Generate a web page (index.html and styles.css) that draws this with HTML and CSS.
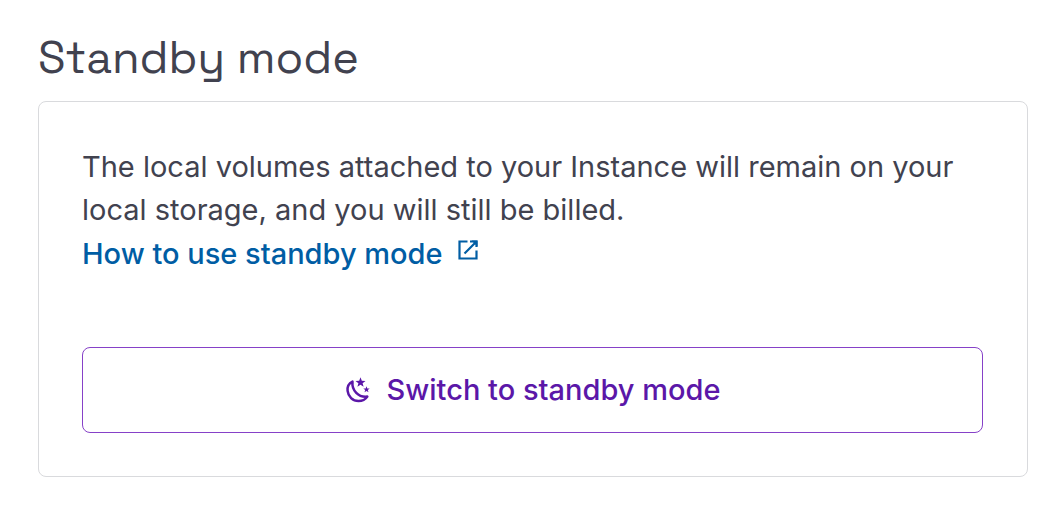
FILE: index.html
```html
<!DOCTYPE html>
<html lang="en">
<head>
<meta charset="utf-8">
<meta name="viewport" content="width=device-width, initial-scale=1">
<title>Standby mode</title>
<link rel="stylesheet" href="styles.css">
</head>
<body>
<main class="page">
  <h1 class="title">Standby mode</h1>
  <section class="card">
    <p class="text">The local volumes attached to your Instance will remain on your local storage, and you will still be billed.</p>
    <a class="link" href="#">How to use standby mode
      <svg class="link-icon" viewBox="0 0 22 22" aria-hidden="true"><path d="M10.500 2.500H2.500v17h17v-8M13 2.500h6.500V8M19.500 2.500 7.500 14.500" fill="none" stroke="currentColor" stroke-width="2.200"/><path d="M14.500 1.500h6v6Z" fill="currentColor"/></svg>
    </a>
    <button class="button" type="button">
      <svg class="moon" viewBox="0 0 26 26" aria-hidden="true"><path d="M7.500 4.500C4 6.200 2.200 10 2.600 13.800 3.200 19.500 7.700 24 13.500 24c3.700 0 6.900-1.500 8.800-4.400C13.600 20.700 6.500 13.500 7.500 4.500Z" fill="none" stroke="currentColor" stroke-width="2.500" stroke-linejoin="round"/><path d="m15.500.3 1.300 3.400 3.700.2-2.900 2.300 1 3.500-3.100-2-3.100 2 1-3.500-2.900-2.300 3.700-.2ZM21.500 9.200l.8 2.200 2.400.1-1.900 1.500.7 2.300-2-1.300-2 1.300.7-2.300-1.900-1.500 2.400-.1Z" fill="currentColor"/></svg>
      Switch to standby mode
    </button>
  </section>
</main>
</body>
</html>
```
FILE: styles.css
```css
* { box-sizing: border-box; }
body { margin: 0; background: #fff; color: #41424f; font-family: Inter, "Liberation Sans", sans-serif; }
.page { padding: 32px 32px 32px 38px; }
.title { margin: 0 0 17px; font-family: "Space Grotesk", Inter, sans-serif; font-size: 45px; line-height: 52px; font-weight: 400; }
.card { display: flex; flex-direction: column; align-items: flex-start; padding: 43px 44px 43px 43px; border: 1px solid #d9dadd; border-radius: 8px; }
.text { margin: 0; font-size: 29px; line-height: 43px; }
.link { display: flex; gap: 14px; color: #005da4; font-size: 29px; line-height: 46px; font-weight: 500; text-decoration: none; }
.link-icon { width: 22px; height: 22px; margin-top: 8px; }
.button { display: flex; align-items: center; justify-content: center; gap: 16px; width: 100%; height: 86px; margin-top: 70px; background: #fff; border: 1px solid #8641c8; border-radius: 8px; color: #5b17a8; font: 500 29px/44px Inter, "Liberation Sans", sans-serif; }
.moon { width: 26px; height: 26px; }
```
